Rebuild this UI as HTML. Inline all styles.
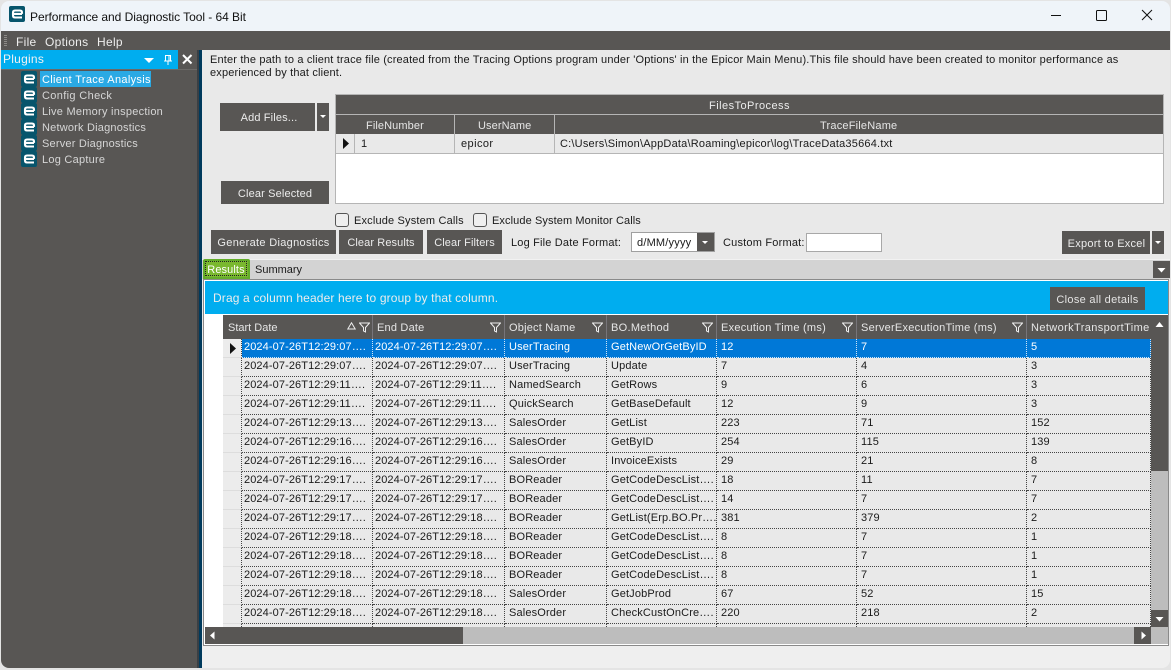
<!DOCTYPE html>
<html><head><meta charset="utf-8"><style>
html,body{margin:0;padding:0}
body{width:1171px;height:670px;overflow:hidden;position:relative;background:#e4e4e4;font:11px/17px "Liberation Sans",sans-serif;color:#1a1a1a;letter-spacing:.2px}
.a,.b,.t{position:absolute}
.t{white-space:nowrap}
.b{background:#585654;color:#ececec;text-align:center;box-sizing:border-box;padding-top:1px;letter-spacing:.15px}
.h{position:absolute;top:0;height:24px;line-height:26px;color:#e6e6e6;white-space:nowrap;letter-spacing:.25px}
.v{position:absolute;top:0;width:1px;height:24px;background:#77757a}
table{position:absolute;left:223px;top:339px;border-collapse:separate;border-spacing:0;table-layout:fixed;width:928px}
td{height:18px;padding:0 0 0 4px;border-right:1px dotted #444;border-bottom:1px dotted #444;background:#e9e9e9;overflow:hidden;white-space:nowrap;vertical-align:top;line-height:17px;box-sizing:content-box;letter-spacing:.15px}
td.s{background:#ececec;border-right:1px dotted #444;border-bottom:1px solid #ddd;padding:0}
td.d{padding-left:2px;letter-spacing:.1px}
tr.sel td{background:#0078d7;color:#fff;border-bottom-color:#cfe4f7;border-right-color:#cfe4f7}
tr.sel td.s{background:#ececec;border-right-color:#444;border-bottom-color:#ddd}
.p{color:#d6d6d6;letter-spacing:.25px}
</style></head><body>
<svg width="0" height="0" style="position:absolute"><defs>
<symbol id="e" viewBox="0 0 16 16"><rect width="16" height="16" rx="2" fill="#07556c"/><path d="M13 7.9H4V6.6Q4 4.5 6 4.5H11Q13 4.5 13 6.6V7.9M4 7.9V9.4Q4 11.5 6 11.5H13" stroke="#fff" stroke-width="2.1" fill="none"/></symbol>
<symbol id="f" viewBox="0 0 11 11"><path d="M.5 1H10.5L6.5 5.5V10L4.5 9V5.5Z" fill="none" stroke="#eee" stroke-width="1"/></symbol>
</defs></svg>

<!-- window -->
<div class="a" style="left:1px;top:1px;width:1169px;height:30px;background:#eff4f9;border-radius:8px 8px 0 0"></div>
<svg class="a" style="left:9px;top:6px" width="16" height="16"><use href="#e"/></svg>
<div class="t" style="left:30px;top:9px;font-size:12px;letter-spacing:-.05px;color:#111">Performance and Diagnostic Tool - 64 Bit</div>
<svg class="a" style="left:1040px;top:5px" width="125" height="20" fill="none" stroke="#111" stroke-width="1"><path d="M11 10.5H21"/><rect x="56.5" y="5.5" width="10" height="10" rx="1"/><path d="M102 5L112 15M112 5L102 15"/></svg>

<div class="a" style="left:1px;top:31px;width:1169px;height:19px;background:#585654"></div>
<div class="a" style="left:4px;top:35px;width:3px;height:11px;background:repeating-linear-gradient(#8d8b88 0 1px,#585654 1px 2px)"></div>
<div class="t" style="left:16px;top:34px;font-size:12px;color:#eee;letter-spacing:.3px">File</div>
<div class="t" style="left:45px;top:34px;font-size:12px;color:#eee;letter-spacing:.3px">Options</div>
<div class="t" style="left:97px;top:34px;font-size:12px;color:#eee;letter-spacing:.3px">Help</div>

<!-- sidebar -->
<div class="a" style="left:1px;top:50px;width:196px;height:618px;background:#585654;border-radius:0 0 0 8px"></div>
<div class="a" style="left:1px;top:50px;width:196px;height:19px;background:#00adef"></div>
<div class="t" style="left:3px;top:51px;font-size:12px;color:#f2f2f2;letter-spacing:.25px">Plugins</div>
<svg class="a" style="left:143px;top:56px" width="12" height="8"><path d="M1 2H11L6 7Z" fill="#fff"/></svg>
<svg class="a" style="left:162px;top:54px" width="12" height="12"><path d="M3.5 1.5H8.5V7H3.5ZM2 7H10M6 7V11M7 2V6.5" stroke="#fff" fill="none"/></svg>
<div class="a" style="left:178px;top:50px;width:19px;height:19px;background:#585654"></div>
<svg class="a" style="left:181px;top:53px" width="13" height="13"><path d="M2 2L10.5 10.5M10.5 2L2 10.5" stroke="#fff" stroke-width="2"/></svg>
<div class="a" style="left:1px;top:69px;width:196px;height:1px;background:#6c6a68"></div>
<div class="a" style="left:40px;top:71px;width:111px;height:16px;background:#2aa9e4"></div>
<svg class="a" style="left:21px;top:71px" width="16" height="16"><use href="#e"/></svg>
<svg class="a" style="left:21px;top:87px" width="16" height="16"><use href="#e"/></svg>
<svg class="a" style="left:21px;top:103px" width="16" height="16"><use href="#e"/></svg>
<svg class="a" style="left:21px;top:119px" width="16" height="16"><use href="#e"/></svg>
<svg class="a" style="left:21px;top:135px" width="16" height="16"><use href="#e"/></svg>
<svg class="a" style="left:21px;top:151px" width="16" height="16"><use href="#e"/></svg>
<div class="t" style="left:42px;top:72px;color:#fff;letter-spacing:.32px">Client Trace Analysis</div>
<div class="t p" style="left:42px;top:88px;letter-spacing:.35px">Config Check</div>
<div class="t p" style="left:42px;top:104px">Live Memory inspection</div>
<div class="t p" style="left:42px;top:120px;letter-spacing:.2px">Network Diagnostics</div>
<div class="t p" style="left:42px;top:136px;letter-spacing:.2px">Server Diagnostics</div>
<div class="t p" style="left:42px;top:152px">Log Capture</div>

<div class="a" style="left:197px;top:50px;width:5px;height:618px;background:linear-gradient(90deg,#3a3f44 0 2px,#003a5c 2px)"></div>

<!-- main -->
<div class="a" style="left:202px;top:50px;width:968px;height:618px;background:#e9e9e9;border-radius:0 0 8px 0"></div>
<div class="a" style="left:202px;top:645px;width:968px;height:23px;background:#efefef;border-radius:0 0 8px 0"></div>
<div class="t" style="left:210px;top:52px;letter-spacing:.165px">Enter the path to a client trace file (created from the Tracing Options program under 'Options' in the Epicor Main Menu).This file should have been created to monitor performance as</div>
<div class="t" style="left:210px;top:65px;letter-spacing:.165px">experienced by that client.</div>

<div class="b" style="left:220px;top:103px;width:95px;height:28px;line-height:28px;padding-left:3px">Add Files...</div>
<div class="b" style="left:317px;top:103px;width:12px;height:28px"></div>
<svg class="a" style="left:319px;top:114px" width="8" height="5"><path d="M1 1H7L4 4Z" fill="#fff"/></svg>
<div class="b" style="left:221px;top:181px;width:108px;height:23px;line-height:25px">Clear Selected</div>

<div class="a" style="left:335px;top:94px;width:829px;height:110px;background:#fff;border:1px solid #b5b5b5;box-sizing:border-box"></div>
<div class="b" style="left:336px;top:95px;width:827px;height:19px;line-height:21px;letter-spacing:.45px">FilesToProcess</div>
<div class="b" style="left:336px;top:115px;width:827px;height:19px"></div>
<div class="a" style="left:336px;top:114px;width:827px;height:1px;background:#b5b5b5"></div>
<div class="a" style="left:454px;top:115px;width:1px;height:38px;background:#b5b5b5"></div>
<div class="a" style="left:554px;top:115px;width:1px;height:38px;background:#b5b5b5"></div>
<div class="t" style="left:366px;top:118px;color:#e6e6e6;letter-spacing:.1px">FileNumber</div>
<div class="t" style="left:478px;top:118px;color:#e6e6e6;letter-spacing:.1px">UserName</div>
<div class="t" style="left:820px;top:118px;color:#e6e6e6">TraceFileName</div>
<div class="a" style="left:336px;top:134px;width:827px;height:19px;background:#e9e9e9"></div>
<div class="a" style="left:336px;top:153px;width:827px;height:1px;background:#b5b5b5"></div>
<div class="a" style="left:354px;top:134px;width:1px;height:19px;background:#b5b5b5"></div>
<div class="a" style="left:454px;top:134px;width:1px;height:19px;background:#b5b5b5"></div>
<div class="a" style="left:554px;top:134px;width:1px;height:19px;background:#b5b5b5"></div>
<svg class="a" style="left:342px;top:138px" width="8" height="11"><path d="M1 0L7 5.5L1 11Z" fill="#111"/></svg>
<div class="t" style="left:361px;top:136px">1</div>
<div class="t" style="left:461px;top:136px;letter-spacing:.42px">epicor</div>
<div class="t" style="left:560px;top:136px;letter-spacing:.21px">C:\Users\Simon\AppData\Roaming\epicor\log\TraceData35664.txt</div>

<div class="a" style="left:335px;top:213px;width:14px;height:14px;border:1px solid #555;border-radius:3px;box-sizing:border-box;background:#efefef"></div>
<div class="t" style="left:354px;top:213px;letter-spacing:.17px">Exclude System Calls</div>
<div class="a" style="left:473px;top:213px;width:14px;height:14px;border:1px solid #555;border-radius:3px;box-sizing:border-box;background:#efefef"></div>
<div class="t" style="left:492px;top:213px;letter-spacing:.1px">Exclude System Monitor Calls</div>

<div class="b" style="left:211px;top:230px;width:125px;height:24px;line-height:24px;letter-spacing:.32px">Generate Diagnostics</div>
<div class="b" style="left:339px;top:230px;width:84px;height:24px;line-height:24px;letter-spacing:.1px">Clear Results</div>
<div class="b" style="left:427px;top:230px;width:75px;height:24px;line-height:24px;letter-spacing:.1px">Clear Filters</div>
<div class="t" style="left:511px;top:235px;letter-spacing:.18px">Log File Date Format:</div>
<div class="a" style="left:631px;top:232px;width:84px;height:20px;background:#fff;border:1px solid #a0a0a0;box-sizing:border-box"></div>
<div class="t" style="left:637px;top:235px">d/MM/yyyy</div>
<div class="b" style="left:697px;top:233px;width:17px;height:18px"></div>
<svg class="a" style="left:701px;top:240px" width="8" height="5"><path d="M1 1H7L4 4Z" fill="#fff"/></svg>
<div class="t" style="left:723px;top:235px">Custom Format:</div>
<div class="a" style="left:806px;top:233px;width:76px;height:19px;background:#fff;border:1px solid #a8a8a8;box-sizing:border-box"></div>
<div class="b" style="left:1062px;top:231px;width:88px;height:23px;line-height:24px;letter-spacing:.25px;padding-left:1px">Export to Excel</div>
<div class="b" style="left:1152px;top:231px;width:12px;height:23px"></div>
<svg class="a" style="left:1154px;top:240px" width="8" height="5"><path d="M1 1H7L4 4Z" fill="#fff"/></svg>

<!-- tabs -->
<div class="a" style="left:202px;top:259px;width:968px;height:20px;background:#d3d3d3;border-top:1px solid #f2f2f2;box-sizing:border-box"></div>
<div class="a" style="left:203px;top:259px;width:47px;height:20px;background:#7ab82f;border:2px solid #63ad2a;box-sizing:border-box;border-radius:2px 2px 0 0"></div>
<div class="t" style="left:205px;top:261px;width:42px;height:15px;box-sizing:border-box;border:1px dotted #222;color:#fff;text-align:center;line-height:15px;letter-spacing:.1px"><span style="position:relative;top:1px">Results</span></div>
<div class="t" style="left:255px;top:262px;letter-spacing:0">Summary</div>
<div class="b" style="left:1153px;top:261px;width:17px;height:17px"></div>
<svg class="a" style="left:1157px;top:268px" width="9" height="5"><path d="M.5 0H8.5L4.5 4.5Z" fill="#fff"/></svg>

<!-- grid frame -->
<div class="a" style="left:203px;top:279px;width:966px;height:367px;background:#fff;border:1px solid #8a8a8a;box-sizing:border-box"></div>
<div class="a" style="left:205px;top:281px;width:963px;height:33px;background:#00adef"></div>
<div class="t" style="left:213px;top:290px;font-size:12px;color:#ececec;letter-spacing:.14px">Drag a column header here to group by that column.</div>
<div class="b" style="left:1050px;top:287px;width:95px;height:23px;line-height:25px;color:#e4e4e4;letter-spacing:.3px">Close all details</div>

<!-- grid header -->
<div class="a" style="left:223px;top:315px;width:945px;height:24px;background:#585654">
<div class="h" style="left:5px;letter-spacing:0">Start Date</div>
<div class="h" style="left:154px;letter-spacing:.2px">End Date</div>
<div class="h" style="left:286px;letter-spacing:.2px">Object Name</div>
<div class="h" style="left:388px;letter-spacing:.3px">BO.Method</div>
<div class="h" style="left:498px">Execution Time (ms)</div>
<div class="h" style="left:638px">ServerExecutionTime (ms)</div>
<div class="h" style="left:808px;letter-spacing:.38px">NetworkTransportTime</div>
<div class="v" style="left:149px"></div><div class="v" style="left:281px"></div><div class="v" style="left:383px"></div><div class="v" style="left:493px"></div><div class="v" style="left:633px"></div><div class="v" style="left:803px"></div>
<svg class="a" style="left:124px;top:7px" width="9" height="8"><path d="M4.5 .8L8.2 7H.8Z" fill="none" stroke="#eee"/></svg>
<svg class="a" style="left:136px;top:7px" width="11" height="11"><use href="#f"/></svg>
<svg class="a" style="left:267px;top:7px" width="11" height="11"><use href="#f"/></svg>
<svg class="a" style="left:369px;top:7px" width="11" height="11"><use href="#f"/></svg>
<svg class="a" style="left:479px;top:7px" width="11" height="11"><use href="#f"/></svg>
<svg class="a" style="left:619px;top:7px" width="11" height="11"><use href="#f"/></svg>
<svg class="a" style="left:789px;top:7px" width="11" height="11"><use href="#f"/></svg>
</div>

<!-- grid body -->
<div class="a" style="left:0;top:0;width:1151px;height:627px;overflow:hidden;pointer-events:none">
<table>
<colgroup><col style="width:19px"><col style="width:131px"><col style="width:132px"><col style="width:102px"><col style="width:110px"><col style="width:140px"><col style="width:170px"><col style="width:124px"></colgroup>
<tr class="sel"><td class="s"></td><td class="d">2024-07-26T12:29:07….</td><td class="d">2024-07-26T12:29:07….</td><td>UserTracing</td><td>GetNewOrGetByID</td><td>12</td><td>7</td><td>5</td></tr>
<tr><td class="s"></td><td class="d">2024-07-26T12:29:07….</td><td class="d">2024-07-26T12:29:07….</td><td>UserTracing</td><td>Update</td><td>7</td><td>4</td><td>3</td></tr>
<tr><td class="s"></td><td class="d">2024-07-26T12:29:11….</td><td class="d">2024-07-26T12:29:11….</td><td>NamedSearch</td><td>GetRows</td><td>9</td><td>6</td><td>3</td></tr>
<tr><td class="s"></td><td class="d">2024-07-26T12:29:11….</td><td class="d">2024-07-26T12:29:11….</td><td>QuickSearch</td><td>GetBaseDefault</td><td>12</td><td>9</td><td>3</td></tr>
<tr><td class="s"></td><td class="d">2024-07-26T12:29:13….</td><td class="d">2024-07-26T12:29:13….</td><td>SalesOrder</td><td>GetList</td><td>223</td><td>71</td><td>152</td></tr>
<tr><td class="s"></td><td class="d">2024-07-26T12:29:16….</td><td class="d">2024-07-26T12:29:16….</td><td>SalesOrder</td><td>GetByID</td><td>254</td><td>115</td><td>139</td></tr>
<tr><td class="s"></td><td class="d">2024-07-26T12:29:16….</td><td class="d">2024-07-26T12:29:16….</td><td>SalesOrder</td><td>InvoiceExists</td><td>29</td><td>21</td><td>8</td></tr>
<tr><td class="s"></td><td class="d">2024-07-26T12:29:17….</td><td class="d">2024-07-26T12:29:17….</td><td>BOReader</td><td>GetCodeDescList….</td><td>18</td><td>11</td><td>7</td></tr>
<tr><td class="s"></td><td class="d">2024-07-26T12:29:17….</td><td class="d">2024-07-26T12:29:17….</td><td>BOReader</td><td>GetCodeDescList….</td><td>14</td><td>7</td><td>7</td></tr>
<tr><td class="s"></td><td class="d">2024-07-26T12:29:17….</td><td class="d">2024-07-26T12:29:18….</td><td>BOReader</td><td>GetList(Erp.BO.Pr….</td><td>381</td><td>379</td><td>2</td></tr>
<tr><td class="s"></td><td class="d">2024-07-26T12:29:18….</td><td class="d">2024-07-26T12:29:18….</td><td>BOReader</td><td>GetCodeDescList….</td><td>8</td><td>7</td><td>1</td></tr>
<tr><td class="s"></td><td class="d">2024-07-26T12:29:18….</td><td class="d">2024-07-26T12:29:18….</td><td>BOReader</td><td>GetCodeDescList….</td><td>8</td><td>7</td><td>1</td></tr>
<tr><td class="s"></td><td class="d">2024-07-26T12:29:18….</td><td class="d">2024-07-26T12:29:18….</td><td>BOReader</td><td>GetCodeDescList….</td><td>8</td><td>7</td><td>1</td></tr>
<tr><td class="s"></td><td class="d">2024-07-26T12:29:18….</td><td class="d">2024-07-26T12:29:18….</td><td>SalesOrder</td><td>GetJobProd</td><td>67</td><td>52</td><td>15</td></tr>
<tr><td class="s"></td><td class="d">2024-07-26T12:29:18….</td><td class="d">2024-07-26T12:29:18….</td><td>SalesOrder</td><td>CheckCustOnCre….</td><td>220</td><td>218</td><td>2</td></tr>
<tr><td class="s"></td><td class="d">2024-07-26T12:29:18….</td><td class="d">2024-07-26T12:29:18….</td><td>SalesOrder</td><td>CheckOrderHoldT….</td><td>31</td><td>28</td><td>3</td></tr>
</table>
</div>
<svg class="a" style="left:229px;top:343px" width="8" height="11"><path d="M1 0L7 5.5L1 11Z" fill="#111"/></svg>

<!-- scrollbars -->
<div class="a" style="left:1151px;top:339px;width:17px;height:132px;background:#585654"></div>
<div class="a" style="left:1151px;top:471px;width:17px;height:173px;background:#bdbdbd"></div>
<svg class="a" style="left:1155px;top:322px" width="9" height="6"><path d="M4.5 0L8.5 5H.5Z" fill="#fff"/></svg>
<div class="a" style="left:1151px;top:610px;width:17px;height:17px;background:#585654"></div>
<svg class="a" style="left:1155px;top:617px" width="9" height="5"><path d="M.5 0H8.5L4.5 4.5Z" fill="#fff"/></svg>
<div class="a" style="left:205px;top:627px;width:946px;height:17px;background:#bdbdbd"></div>
<div class="a" style="left:205px;top:627px;width:258px;height:17px;background:#585654"></div>
<svg class="a" style="left:210px;top:631px" width="5" height="9"><path d="M4.5 .5V8.5L0 4.5Z" fill="#fff"/></svg>
<div class="a" style="left:1134px;top:627px;width:17px;height:17px;background:#585654"></div>
<svg class="a" style="left:1141px;top:631px" width="5" height="9"><path d="M.5 .5V8.5L5 4.5Z" fill="#fff"/></svg>
</body></html>
